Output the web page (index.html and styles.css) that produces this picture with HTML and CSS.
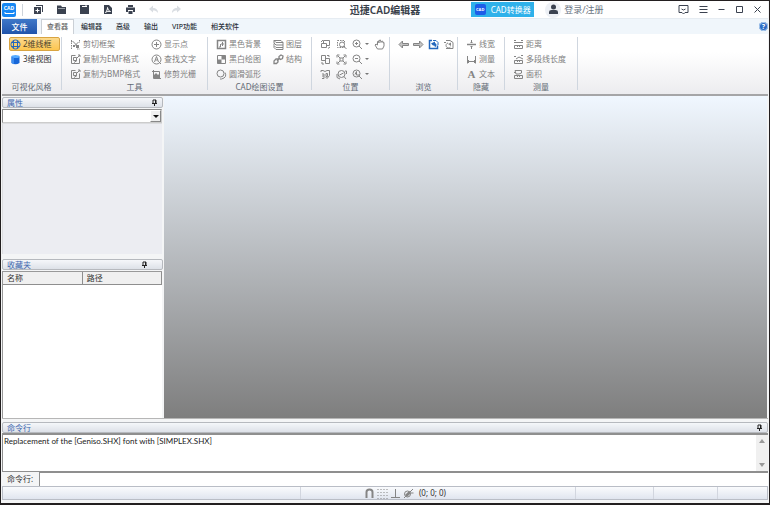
FILE: index.html
```html
<!DOCTYPE html>
<html lang="zh-CN">
<head>
<meta charset="utf-8">
<title>迅捷CAD编辑器</title>
<link rel="stylesheet" href="styles.css">
</head>
<body>
<header class="titlebar">
  <div class="quick">
    <span class="logo"><span>CAD</span><svg viewBox="0 0 13 4"><path d="M2 1v1.5h9V1M4 2.5h5"/></svg></span>
    <span class="rule"></span>
    <button aria-label="新建"><svg class="ic dark" viewBox="0 0 11 11"><path class="f" d="M3 1h7v7H9V2H3zM1 3h7v7H1z"/><path class="w" d="M4.500 4.500v4M2.500 6.500h4"/></svg></button>
    <button aria-label="打开"><svg class="ic dark" viewBox="0 0 11 11"><path class="f" d="M1 1.500h4l1 1.500h4v7H1z"/><path class="w thin" d="M2 4.500h7"/></svg></button>
    <button aria-label="保存"><svg class="ic dark" viewBox="0 0 11 11"><path class="f" d="M1 1h9v9H1z"/><path class="w" d="M3 2.500h5M7 1v2"/></svg></button>
    <button aria-label="导出PDF"><svg class="ic dark" viewBox="0 0 11 11"><path class="f" d="M2 1h5l3 3v6H2z"/><path class="w" d="M3.500 8.500C5 7 5.500 5 5.500 3.500 6 6 7 7 8.500 7.500 6.500 7 5 7.500 3.500 8.500z"/></svg></button>
    <button aria-label="打印"><svg class="ic dark" viewBox="0 0 11 11"><path class="f" d="M3 1h5v2H3zM1 3.500h9V8H8V6H3v2H1zM3.500 7h4v3h-4z"/></svg></button>
    <button aria-label="撤销"><svg class="ic pale" viewBox="0 0 11 11"><path class="f" d="M1 5l4-3.500V4c3 0 5 1.500 5 5C8.500 7 7 6.500 5 6.500V8.500z"/></svg></button>
    <button aria-label="重做"><svg class="ic pale" viewBox="0 0 11 11"><path class="f" d="M10 5L6 1.500V4C3 4 1 5.500 1 9c1.500-2 3-2.500 5-2.500V8.500z"/></svg></button>
  </div>
  <h1>迅捷CAD编辑器</h1>
  <div class="account">
    <button class="convert"><span class="logo small"><span>CAD</span></span>CAD转换器</button>
    <a class="login" href="#"><span class="avatar"><svg class="ic dark" viewBox="0 0 11 11"><circle class="f" cx="5.500" cy="3" r="2.500"/><path class="f" d="M1 10V8q0-2 2.500-2h4Q10 6 10 8v2z"/></svg></span>登录/注册</a>
    <div class="window">
      <button aria-label="反馈"><svg class="ic dark" viewBox="0 0 11 11"><path d="M1 1.500h9v7H7L5.500 10 4 8.500H1zM3.500 5q2 2 4 0"/></svg></button>
      <button aria-label="菜单"><svg class="ic dark" viewBox="0 0 11 11"><path d="M1.500 2.500h8M1.500 5.500h8M1.500 8.500h8"/></svg></button>
      <button aria-label="最小化"><svg class="ic dark" viewBox="0 0 11 11"><path d="M2.500 5.500h6"/></svg></button>
      <button aria-label="最大化"><svg class="ic dark" viewBox="0 0 11 11"><path d="M2.500 2.500h6v6h-6z"/></svg></button>
      <button aria-label="关闭"><svg class="ic dark" viewBox="0 0 11 11"><path d="M2.500 2.500l6 6M8.500 2.500l-6 6"/></svg></button>
    </div>
  </div>
</header>

<nav class="tabs">
  <button class="file">文件</button>
  <button class="active">查看器</button>
  <button>编辑器</button>
  <button>高级</button>
  <button>输出</button>
  <button>VIP功能</button>
  <button>相关软件</button>
  <button class="help" aria-label="帮助">?</button>
</nav>

<section class="ribbon">
  <div class="group g-style">
    <div class="cols"><div class="col">
      <button class="tool on"><svg class="ic blue" viewBox="0 0 11 11"><circle cx="5.500" cy="5.500" r="4.500"/><path d="M1.500 3.500h8M1.500 7.500h8M3.500 1.500v8M7.500 1.500v8"/></svg>2维线框</button>
      <button class="tool dk"><svg class="ic" viewBox="0 0 11 11"><path fill="#1767d8" stroke="none" d="M1.500 2.500h8v6.500q-4 2.500-8 0z"/><ellipse fill="#55aaff" stroke="none" cx="5.500" cy="2.500" rx="4" ry="1.500"/><path fill="#3c8df0" stroke="none" d="M1.500 2.500L4 4v6.300L1.500 9z"/></svg>3维视图</button>
    </div></div>
    <h2>可视化风格</h2>
  </div>
  <div class="group g-tools">
    <div class="cols">
      <div class="col">
        <button class="tool"><svg class="ic" viewBox="0 0 11 11"><path stroke-dasharray="1.500 1" d="M1.500 1v9M1 2.500h3M9.500 1v3M7 10h3"/><path d="M3.500 3l5 5M8.500 3l-4 4"/><path class="f" d="M6 6h3v3H6zM3 6h2v2H3z"/></svg>剪切框架</button>
        <button class="tool"><svg class="ic" viewBox="0 0 11 11"><path d="M1.500 1.500h4M1.500 1.500v8h8v-5M3.500 3.500h3v3h-3zM7 4l3-3M8 1h2v2M4 8.500l3-2"/></svg>复制为EMF格式</button>
        <button class="tool"><svg class="ic" viewBox="0 0 11 11"><path d="M1.500 1.500h4M1.500 1.500v8h8v-5M3.500 3.500h3v3h-3zM7 4l3-3M8 1h2v2M4 8.500l3-2"/></svg>复制为BMP格式</button>
      </div>
      <div class="col">
        <button class="tool"><svg class="ic" viewBox="0 0 11 11"><circle cx="5.500" cy="5.500" r="4.500"/><path d="M5.500 3v5M3 5.500h5"/></svg>显示点</button>
        <button class="tool"><svg class="ic" viewBox="0 0 11 11"><circle cx="5.500" cy="5.500" r="4.500"/><path d="M3.500 8l2-5.500 2 5.500M4.500 6h2M8 8l2 2"/></svg>查找文字</button>
        <button class="tool"><svg class="ic" viewBox="0 0 11 11"><path d="M2.500 1v8.500H10M1 2.500h7.500V10"/><path class="f" d="M3 9V6l2-2 2 2 1-1v4z"/></svg>修剪光栅</button>
      </div>
    </div>
    <h2>工具</h2>
  </div>
  <div class="group g-draw">
    <div class="cols">
      <div class="col">
        <button class="tool"><svg class="ic" viewBox="0 0 11 11"><path stroke-width="1.500" d="M1.500 1.500h8v8h-8z"/><path d="M3 8h1.500V5M6.500 3v4M5 5h3"/></svg>黑色背景</button>
        <button class="tool"><svg class="ic" viewBox="0 0 11 11"><path d="M1.500 1.500h8v8h-8z"/><path class="f" d="M5.500 1.500h4v4h-4zM1.500 5.500h4v4h-4z"/></svg>黑白绘图</button>
        <button class="tool"><svg class="ic" viewBox="0 0 11 11"><circle cx="4.500" cy="4.500" r="3.500"/><path d="M9 3.500q2.500 5-3.500 6.500H4"/></svg>圆滑弧形</button>
      </div>
      <div class="col">
        <button class="tool"><svg class="ic" viewBox="0 0 11 11"><path d="M1 1.500h7l2 2H3zM1 1.500V4l2 2h7V3.500M1 4.500v2l2 2h7V6M1 7v1.500L3 10.500h7V8.500"/></svg>图层</button>
        <button class="tool"><svg class="ic" viewBox="0 0 11 11"><path stroke-width="1.300" d="M6 4V2.500L8 1l2 1-.5 2.500-2 1zM5 5H3L1 7v2.500h2.500L5 8zM4 7l3-3"/></svg>结构</button>
      </div>
    </div>
    <h2>CAD绘图设置</h2>
  </div>
  <div class="group g-place">
    <div class="cols">
      <div class="col">
        <button class="tool" aria-label="视图旋转"><svg class="ic" viewBox="0 0 11 11"><path d="M3.500 4.500V1.500h6v5h-3M1.500 4.500h5v4h-5zM1 3l2-2M8 9.500L10 8"/></svg></button>
        <button class="tool" aria-label="视图复制"><svg class="ic" viewBox="0 0 11 11"><path d="M1.500 1.500h4v5h-4zM5.500 4.500h4v5h-4zM7 1.500h2V3M2 8v2h2"/></svg></button>
        <button class="tool" aria-label="三维旋转"><svg class="ic" viewBox="0 0 11 11"><path d="M1 3V1.500h2l2 1 2-1h2.500v5L7 9.500 5.500 8M2 5h2v2H2M4 7v2.500H2M6 4.500v3h1.500v-3z"/></svg></button>
      </div>
      <div class="col">
        <button class="tool" aria-label="窗口缩放"><svg class="ic" viewBox="0 0 11 11"><path stroke-dasharray="1.500 1" d="M1.500 1.500h7v7h-7z"/><circle cx="6" cy="5.500" r="2.500" fill="#fff"/><path d="M8 7.500l2.500 2.500"/></svg></button>
        <button class="tool" aria-label="适合窗口"><svg class="ic" viewBox="0 0 11 11"><path d="M1 3.500V1h2.500M7.500 1H10v2.500M10 7.500V10H7.500M3.500 10H1V7.500M2 2l2 2M9 2L7 4M2 9l2-2M9 9L7 7M4 4h3v3H4z"/></svg></button>
        <button class="tool" aria-label="动态缩放"><svg class="ic" viewBox="0 0 11 11"><circle cx="5.500" cy="5" r="3.500"/><path d="M8 7.500l2 2.500M3.500 6l4-2M1 5v3.500L4 10M9 2h1.500v3"/></svg></button>
      </div>
      <div class="col">
        <button class="tool" aria-label="放大"><svg class="ic" viewBox="0 0 11 11"><circle cx="4.500" cy="4.500" r="3.500"/><path d="M7 7l3 3M3 4.500h3M4.500 3v3"/></svg><i class="caret"></i></button>
        <button class="tool" aria-label="缩小"><svg class="ic" viewBox="0 0 11 11"><circle cx="4.500" cy="4.500" r="3.500"/><path d="M7 7l3 3M3 4.500h3"/></svg><i class="caret"></i></button>
        <button class="tool" aria-label="缩放"><svg class="ic" viewBox="0 0 11 11"><circle cx="4.500" cy="4.500" r="3.500"/><path d="M7 7l3 3M3 5.500l1.500-3v3.500h3"/></svg><i class="caret"></i></button>
      </div>
      <div class="col">
        <button class="tool" aria-label="平移"><svg class="ic" viewBox="0 0 11 11"><path d="M3.500 10L1 6l1-1 1.500 1V2.500l1-.5.5 2V1.500L6.500 1 7 3.500 8 2l1 .5v1.500l1-.5V7L8.500 10z"/></svg></button>
      </div>
    </div>
    <h2>位置</h2>
  </div>
  <div class="group g-browse">
    <div class="cols">
      <button class="tool" aria-label="后退"><svg class="ic" viewBox="0 0 11 11"><path fill="#c4c4c4" d="M1 5.500L4.500 2v2.500h6v2h-6V9z"/></svg></button>
      <button class="tool" aria-label="前进"><svg class="ic" viewBox="0 0 11 11"><path fill="#c4c4c4" d="M10 5.500L6.500 2v2.500h-6v2h6V9z"/></svg></button>
      <button class="tool" aria-label="还原视图"><svg class="ic blue" viewBox="0 0 11 11"><path stroke-width="1.500" d="M4 1.500H1.500v8h8v-3"/><path d="M5 1.500h3l2 2V6"/><path class="f" d="M3 4.500l4-2v1.500q3 1 0 4.500 0-2-1.500-2.500V7z"/></svg></button>
      <button class="tool" aria-label="刷新视图"><svg class="ic" viewBox="0 0 11 11"><path d="M3 1.500h4l3 2v6H3M1 3.500h2M5 4a2.500 2.500 0 1 0 2.500 4"/><path class="f" d="M5 5l3-1.500V7z"/></svg></button>
    </div>
    <h2>浏览</h2>
  </div>
  <div class="group g-hide">
    <div class="cols"><div class="col">
      <button class="tool"><svg class="ic" viewBox="0 0 11 11"><path stroke-width="1.500" d="M1 5.500h9"/><path d="M5.500 1v3M5.500 7v3M4.500 3l1 1 1-1M4.500 8l1-1 1 1"/></svg>线宽</button>
      <button class="tool"><svg class="ic" viewBox="0 0 11 11"><path d="M1.500 2v7.500M9.500 2v7.500M1 7.500h9M3 6L1.500 7.500 3 9M8 6l1.500 1.500L8 9"/></svg>测量</button>
      <button class="tool"><span class="ic letter">A</span>文本</button>
    </div></div>
    <h2>隐藏</h2>
  </div>
  <div class="group g-measure">
    <div class="cols"><div class="col">
      <button class="tool"><svg class="ic" viewBox="0 0 11 11"><path d="M1 1.500h2M8 1.500h2M1 3.500h9M1.500 6.500h8v3h-8zM4.500 6.500V8M6.500 6.500V8"/></svg>距离</button>
      <button class="tool"><svg class="ic" viewBox="0 0 11 11"><path d="M1 2.500h2M3 5l3-2 4 2M8 1.500h2M1.500 6.500h8v3h-8zM4.500 6.500V8M6.500 6.500V8"/></svg>多段线长度</button>
      <button class="tool"><svg class="ic" viewBox="0 0 11 11"><path d="M2 1.500h6.500V4L6 5H3zM1.500 6.500h8v3h-8zM4.500 6.500V8M6.500 6.500V8M1 3.500h2"/></svg>面积</button>
    </div></div>
    <h2>测量</h2>
  </div>
</section>

<main class="work">
  <aside class="side">
    <section class="panel props">
      <header class="phead"><h3>属性</h3><button aria-label="固定属性面板"><svg class="pin" viewBox="0 0 7 7"><path d="M2 4V1h3v3M1 4.500h5M3.500 4.500V7M4.500 1v3"/></svg></button></header>
      <div class="combo"><select aria-label="属性对象"><option></option></select><i><b></b></i></div>
      <div class="pbody"></div>
    </section>
    <section class="panel favs">
      <header class="phead"><h3>收藏夹</h3><button aria-label="固定收藏夹"><svg class="pin" viewBox="0 0 7 7"><path d="M2 4V1h3v3M1 4.500h5M3.500 4.500V7M4.500 1v3"/></svg></button></header>
      <div class="flist"><table><thead><tr><th>名称</th><th>路径</th></tr></thead></table></div>
    </section>
  </aside>
  <div class="canvas"></div>
</main>

<section class="command">
  <header class="phead"><h3>命令行</h3><button aria-label="固定命令行"><svg class="pin" viewBox="0 0 7 7"><path d="M2 4V1h3v3M1 4.500h5M3.500 4.500V7M4.500 1v3"/></svg></button></header>
  <div class="log"><p>Replacement of the [Geniso.SHX] font with [SIMPLEX.SHX]</p><div class="scroll"><i class="up"></i><i class="down"></i></div></div>
  <div class="prompt"><label for="cmd">命令行:</label><input id="cmd" type="text"></div>
</section>

<footer class="status">
  <div class="cell first"></div>
  <div class="cell modes">
    <button aria-label="捕捉"><svg class="ic" viewBox="0 0 11 11"><path stroke-width="2" d="M2.500 10V4q0-2.500 3-2.500t3 2.500v6"/></svg></button>
    <button aria-label="栅格"><svg class="ic" viewBox="0 0 11 11"><path stroke-dasharray="1 2" d="M.5 1.500h10M.5 4.500h10M.5 7.500h10M.5 10.500h10"/></svg></button>
    <button aria-label="正交"><svg class="ic" viewBox="0 0 11 11"><path d="M5.500 1v8.500M1 9.500h9"/></svg></button>
    <button aria-label="对象捕捉"><svg class="ic" viewBox="0 0 11 11"><circle cx="4.500" cy="6" r="3"/><path class="f" d="M2 7l4-4 2 2-4 4z"/><path d="M1 10l9-9M8 5h2.500"/></svg></button>
    <output>(0; 0; 0)</output>
  </div>
  <div class="cell c3"></div>
  <div class="cell c4"></div>
  <div class="cell c5"></div>
</footer>
</body>
</html>
```
FILE: styles.css
```css
* { box-sizing: border-box; }
body {
  margin: 0;
  min-height: 100vh;
  display: flex;
  flex-direction: column;
  border: 1px solid #231f20;
  border-bottom-width: 2px;
  padding: 0 1px 3px;
  background: #f4f5f6;
  color: #333;
  font: 8px/10px "Noto Sans", "Noto Sans CJK SC", sans-serif;
}
h1, h2, h3, p { margin: 0; font-weight: 400; }
button, select, input { font: inherit; color: inherit; padding: 0; margin: 0; border: 0; background: none; }
button { display: flex; align-items: center; justify-content: center; white-space: nowrap; }
a { color: inherit; text-decoration: none; }

.ic { width: 11px; height: 11px; flex: none; fill: none; stroke: #858585; color: #858585; stroke-width: 1; }
.ic .f { fill: currentColor; stroke: none; }
.ic .w { stroke: #fff; }
.ic .thin { stroke-width: .5; }
.ic.dark { stroke: #3b4250; color: #3b4250; }
.ic.pale { color: #d9dde2; }
.ic.blue { stroke: #2467bd; color: #2467bd; }

.titlebar { display: grid; grid-template-columns: 1fr auto 1fr; align-items: center; height: 17px; background: #fff; }
.titlebar h1 { font-size: 10px; line-height: 14px; font-weight: 600; color: #38404a; }
.quick { display: flex; align-items: center; gap: 12px; }
.logo { display: flex; flex-direction: column; align-items: center; justify-content: center; width: 14px; height: 14px; border-radius: 2px; background: #1687f4; color: #fff; font-size: 5px; line-height: 6px; font-weight: 700; }
.logo svg { width: 13px; height: 4px; fill: none; stroke: #fff; }
.logo.small { width: 11px; height: 11px; background: #1d5de8; font-size: 4px; }
.rule { width: 1px; height: 12px; margin: 0 -2px 0 -6px; background: #cdd3da; }
.account { display: flex; align-items: center; padding-left: 51px; }
.convert { gap: 5px; width: 63px; height: 15px; background: #2fb1ea; color: #fff; }
.login { display: flex; align-items: center; gap: 3px; margin-left: 11px; font-size: 9px; color: #697482; }
.avatar { display: grid; place-items: center; width: 16px; height: 16px; border-radius: 50%; background: #edf0f5; }
.window { display: flex; gap: 7px; margin-left: auto; padding-right: 5px; }
.window button:first-child { margin-right: 2px; }

.tabs { display: flex; height: 16px; background: #f0f6fb; border-top: 1px solid #e6ecf2; color: #2d333b; font-size: 7px; font-weight: 500; }
.tabs button { padding: 0 7px; }
.tabs .file { width: 35px; margin-right: 4px; background: linear-gradient(#3f78c8, #2054ab); color: #fff; font-size: 8px; }
.tabs .active { width: 33px; padding: 0 5px; border: 1px solid #cbd0d6; border-bottom: 0; background: #fff; color: #666; }
.tabs .help { width: 9px; height: 9px; margin: 3px 0 0 auto; padding: 0; border-radius: 50%; background: #2d6cc4; box-shadow: 0 0 0 1px #a8c8ec inset; color: #fff; font-weight: 700; }

.ribbon { display: flex; height: 62px; padding: 3px 0 4px; border-bottom: 2px solid #a5a5a7; background: linear-gradient(#fff 30%, #ececef); color: #808080; }
.group { display: flex; flex-direction: column; justify-content: space-between; border-right: 1px solid #cfd6df; }
.group h2 { font-size: 8px; line-height: 10px; text-align: center; color: #626a74; margin-bottom: -2px; }
.cols { display: flex; align-items: flex-start; padding-left: 8px; }
.col { display: flex; flex-direction: column; flex: none; align-items: flex-start; gap: 1px; }
.tool { height: 14px; gap: 2px; }
.letter { font: 700 11px/11px "Liberation Serif", serif; text-align: center; }
.tool.on { width: 51px; justify-content: flex-start; border: 1px solid #d9a441; border-radius: 2px; background: linear-gradient(#fbd98d, #fdc650); color: #4c402a; }
.tool.dk { color: #333; padding-left: 1px; }
.caret { border: 2px solid transparent; border-top-color: #777; border-bottom: 0; }
.g-style { width: 60px; }
.g-style .cols { padding-left: 7px; }
.g-tools { width: 146px; }
.g-tools .col { width: 81px; }
.g-draw { width: 104px; }
.g-draw .col { width: 57px; }
.g-draw .col + .col { width: 34px; }
.g-tools .col + .col { width: 50px; }
.g-place { width: 78px; }
.g-place .col { width: 16px; }
.g-place .col:nth-child(3) { width: 22px; }
.g-browse { width: 68px; }
.g-browse .cols { gap: 4px; }
.g-hide { width: 47px; }
.g-measure { width: 73px; }

.work { flex: 1; display: flex; padding: 0 1px 0 0; }
.side { display: flex; flex-direction: column; gap: 5px; width: 161px; margin-right: 1px; padding-top: 1px; }
.panel { display: flex; flex-direction: column; }
.props { flex: 158; }
.favs { flex: 160; }
.phead { display: flex; align-items: center; justify-content: space-between; height: 11px; padding: 0 4px; border: 1px solid #b6b9be; border-radius: 2px; background: linear-gradient(#f5f7fa, #dde1e8); }
.phead h3 { font-size: 8px; line-height: 9px; color: #3d66ae; }
.pin { width: 7px; height: 7px; fill: none; stroke: #222; }
.favs .phead { padding-right: 14px; }
.combo { position: relative; height: 14px; margin: 1px 1px 0 0; border: 1px solid #8c8c8c; border-right-color: #ccc; border-bottom-color: #ccc; background: #fff; }
.combo select { appearance: none; display: block; width: 100%; height: 100%; }
.combo i { position: absolute; top: 0; right: 0; bottom: 0; width: 11px; display: grid; place-items: center; border: 1px solid #fff; border-right-color: #888; border-bottom-color: #888; background: #efefef; pointer-events: none; }
.combo b { border: 3px solid transparent; border-top-color: #111; border-bottom: 0; }
.pbody { flex: 1; margin-right: 1px; border: 1px solid #dcdde0; border-width: 1px 0 0 1px; background: #ecedf2; }
.flist { flex: 1; margin: 1px 1px 0 0; border-left: 1px solid #999; border-top: 1px solid #999; background: #fff; }
.flist table { width: 100%; border-collapse: collapse; table-layout: fixed; }
.flist th { height: 12px; padding: 0 4px; border: 1px solid #8e8e8e; border-width: 0 1px 1px 0; background: #f0f0f0; font-weight: 400; text-align: left; }
.canvas { flex: 1; background: linear-gradient(#f0f7ff, #7e7e7e); }

.command { padding: 3px 0 0; border-top: 1px solid #b6b6b6; }
.log { display: flex; justify-content: space-between; height: 39px; border: 1px solid #8f8f8f; border-top-width: 2px; border-right: 0; background: #fff; color: #222; font-family: Lato, sans-serif; }
.log p { padding: 1px; }
.scroll { display: flex; flex-direction: column; justify-content: space-between; width: 12px; padding: 4px 3px; background: #f0f0f0; }
.scroll i { border: 3px solid transparent; }
.scroll .up { border-top: 0; border-bottom: 4px solid #999; }
.scroll .down { border-bottom: 0; border-top: 4px solid #999; }
.prompt { display: flex; align-items: center; height: 14px; }
.prompt label { width: 37px; padding-left: 5px; }
.prompt input { flex: 1; height: 14px; border: solid #8f8f8f; border-width: 1px 0 0 1px; background: #fff; }

.status { display: flex; height: 14px; border: 1px solid #b9bdc6; background: linear-gradient(#fafbfd, #e0e5ef); }
.cell { display: flex; align-items: center; border-right: 1px solid #d2d6df; }
.first { width: 39%; }
.modes { flex: 1; gap: 2px; padding-left: 63px; }
.modes output { margin-left: 3px; }
.c3 { width: 78px; }
.c4 { width: 64px; }
.c5 { width: 49px; border: 0; }
```
